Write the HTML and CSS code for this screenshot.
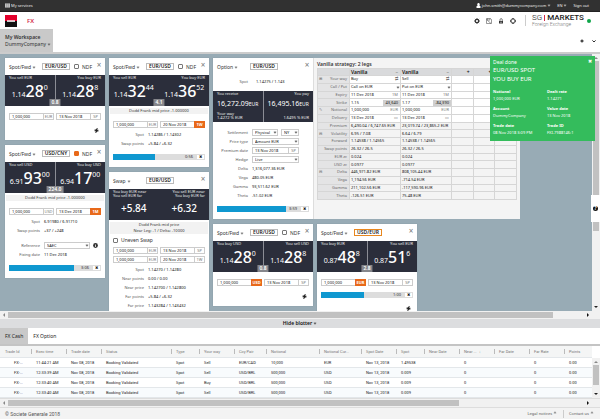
FILE: index.html
```html
<!DOCTYPE html>
<html lang="en">
<head>
<meta charset="utf-8">
<title>SG Markets - FX</title>
<link rel="stylesheet" href="styles.css">
</head>
<body>
<nav class="topbar">
  <a href="#" class="services"><svg class="ico" viewBox="0 0 10 10"><path d="M0 1h10v8H0z" fill="#ddd"/><path d="M3.3 1v8M6.6 1v8M0 3.6h10M0 6.3h10" stroke="#555" stroke-width=".6"/></svg>My services</a>
  <a href="#"><svg class="ico" viewBox="0 0 10 10"><path d="M5 0a2.5 2.7 0 0 1 1.6 4.8L9 6.5V10H1V6.500l2.400-1.700A2.500 2.700 0 0 1 5 0z" fill="#fff"/></svg>john.smith@dummycompany.com<i class="chev"></i></a>
  <a href="#">EN<i class="chev"></i></a>
  <a href="#">Sign out</a>
</nav>
<header class="brandbar">
  <svg class="logo" viewBox="0 0 12 12"><path d="M0 0h12v6H0z" fill="#e2002b"/><path d="M0 6h12v6H0z" fill="#111"/><path d="M2 5.300h8v1.500H2z" fill="#fff"/></svg>
  <a href="#" class="product">FX</a>
  <div class="tools">
    <svg viewBox="0 0 12 12"><circle cx="6" cy="6" r="3.400" fill="none" stroke="#333" stroke-width="2.400"/><path d="M6 0v2M6 10v2M0 6h2M10 6h2M1.800 1.800l1.400 1.400M8.800 8.800l1.400 1.400M1.800 10.200l1.400-1.400M8.800 3.200l1.400-1.400" stroke="#333" stroke-width="1.600"/></svg>
    <svg viewBox="0 0 12 12"><path d="M1 1h8l2 2v8H1zM3 1v3h5V1M1 3l9 8" fill="none" stroke="#555" stroke-width="1.200"/></svg>
    <svg viewBox="0 0 12 12"><path d="M2 6h8v5H2z" fill="#333"/><path d="M4 6V3.500a2.200 2.200 0 0 1 4.500 0V6" fill="none" stroke="#444" stroke-width="1.400"/><path d="M4 8.500h4" stroke="#fff"/></svg>
    <svg viewBox="0 0 12 12"><circle cx="6" cy="6" r="4.500" fill="none" stroke="#444" stroke-width="1.800"/><path d="M6 0v3.500M6 8.500V12M0 6h3.500M8.500 6H12" stroke="#222" stroke-width="2"/><circle cx="6" cy="6" r="2.300" fill="#fff"/></svg>
  </div>
  <div class="brand"><div class="name">SG<i></i><b>MARKETS</b></div><small>Foreign Exchange</small></div>
  <span class="online"></span>
</header>
<div class="workspaces">
  <button class="workspace"><b>My Workspace</b><span>DummyCompany<i class="chev"></i></span></button>
  <div class="wstools">
    <svg viewBox="0 0 10 10"><path d="M5 1v8M1 5h8" stroke="#111" stroke-width="2.600"/></svg>
    <svg viewBox="0 0 10 10"><path d="M1 3.500l4 4 4-4" fill="none" stroke="#111" stroke-width="2.200"/></svg>
  </div>
</div>

<main class="stage">
  <div class="board">
    <div class="stack">
      <section class="card">
        <header><button class="kind">Spot/Fwd<i class="chev"></i></button><button class="pair">EUR/USD</button><label class="tick"><input type="checkbox">NDF</label><button class="close" aria-label="Close">×</button></header>
        <div class="tiles">
          <button class="tile"><small>You sell EUR</small><span class="rate">1.14<b>28</b><sup>0</sup></span></button>
          <button class="tile"><small>You buy EUR</small><span class="rate">1.14<b>28</b><sup>8</sup></span></button>
          <span class="spread">0.8</span>
        </div>
        <div class="fields apart"><div class="field"><input aria-label="Amount" value="1,000,000"><button>EUR</button></div><div class="field"><input aria-label="Date" value="13 Nov 2018"><button>SP</button></div></div>
        <div class="flash"><svg viewBox="0 0 10 10"><path d="M7 0L1 5.500l3 .5L3 10l6-5.500-3-.5zM1 3l8 4" stroke="#222" stroke-width=".8" fill="#222"/></svg></div>
      </section>
      <section class="card">
        <header><button class="kind">Spot/Fwd<i class="chev"></i></button><button class="pair">USD/CNY</button><label class="tick"><input type="checkbox" checked>NDF</label><button class="close" aria-label="Close">×</button></header>
        <div class="tiles">
          <button class="tile"><small>You sell USD</small><span class="rate">6.91<b>93</b><sup>00</sup></span></button>
          <button class="tile"><small>You buy USD</small><span class="rate">6.94<b>17</b><sup>00</sup></span></button>
          <span class="spread">224.0</span>
        </div>
        <p class="strip">Dodd Frank mid price -1.000000</p>
        <div class="fields"><div class="field"><input aria-label="Amount" value="1,000,000"><button>USD</button></div><div class="field"><input aria-label="Date" value="13 Dec 2018"><button class="hot">1M</button></div></div>
        <dl class="facts"><dt>Spot</dt><dd>6.91980 / 6.91710</dd><dt>Swap points</dt><dd>+37 / +248</dd></dl>
        <dl class="facts second"><dt><label for="ref">Reference</label></dt><dd class="pick"><span class="sel"><select id="ref"><option>SAEC</option></select><i class="chev"></i></span><svg class="info" viewBox="0 0 10 10"><circle cx="5" cy="5" r="4.800" fill="#333"/><path d="M5 4v4M5 2v1" stroke="#fff" stroke-width="1.500"/></svg></dd><dt>Fixing date</dt><dd>11 Dec 2018</dd></dl>
        <div class="timer"><div class="bar"><i style="width:78%"></i><span>3:06</span></div><button aria-label="Cancel">✖</button></div>
      </section>
    </div>

    <div class="stack">
      <section class="card">
        <header><button class="kind">Spot/Fwd<i class="chev"></i></button><button class="pair">EUR/USD</button><label class="tick"><input type="checkbox">NDF</label><button class="close" aria-label="Close">×</button></header>
        <div class="tiles joined">
          <button class="tile"><small>You sell EUR</small><span class="rate">1.14<b>32</b><sup>44</sup></span></button>
          <button class="tile"><small>You buy EUR</small><span class="rate">1.14<b>36</b><sup>52</sup></span></button>
          <span class="spread">4.1</span>
        </div>
        <p class="strip">Dodd Frank mid price -1.000000</p>
        <div class="fields"><div class="field"><input aria-label="Amount" value="1,000,000"><button>EUR</button></div><div class="field"><input aria-label="Date" value="20 Nov 2018"><button class="hot">1W</button></div></div>
        <dl class="facts"><dt>Spot</dt><dd>1.14286 / 1.14302</dd><dt>Swap points</dt><dd>+5.84 / +6.32</dd></dl>
        <div class="timer"><div class="bar"><i style="width:50%"></i><span>0:56</span></div><button aria-label="Cancel">✖</button></div>
      </section>
      <section class="card">
        <header><button class="kind">Swap<i class="chev"></i></button><button class="pair">EUR/USD</button><span class="tick"></span><button class="close" aria-label="Close">×</button></header>
        <div class="tiles joined">
          <button class="tile"><small>You buy EUR near<br>You sell EUR far</small><strong>+5.84</strong></button>
          <button class="tile"><small>You sell EUR near<br>You buy EUR far</small><strong>+6.32</strong></button>
        </div>
        <p class="strip">Dodd Frank mid price<br>Near Leg: -1 / Delta: -10000</p>
        <label class="uneven"><input type="checkbox">Uneven Swap</label>
        <div class="fields tight"><div class="field"><input aria-label="Near amount" value="1,000,000"><button>EUR</button></div><div class="field"><input aria-label="Near date" value="13 Nov 2018"><button>SP</button></div></div>
        <div class="fields tight"><div class="field"><input aria-label="Far amount" value="1,000,000"><button>EUR</button></div><div class="field"><input aria-label="Far date" value="20 Nov 2018"><button>1W</button></div></div>
        <dl class="facts"><dt>Spot</dt><dd>1.14270 / 1.14280</dd><dt>Near points</dt><dd>0.00 / 0.00</dd><dt>Near price</dt><dd>1.142700 / 1.142800</dd><dt>Far points</dt><dd>+5.84 / +6.32</dd><dt>Far price</dt><dd>1.143284 / 1.143432</dd></dl>
      </section>
    </div>

    <div class="stack wide">
      <div class="duo">
        <section class="card">
          <header><button class="kind">Option<i class="chev"></i></button><button class="pair">EUR/USD</button><span class="tick"></span><button class="close" aria-label="Close">×</button></header>
          <dl class="facts spot"><dt>Spot</dt><dd>1.14275 / 1.143</dd></dl>
          <div class="tiles">
            <button class="tile"><small>You receive</small><span class="premium">16,272.09<em>EUR</em></span><small>Your way<br>1.4272 % EUR</small></button>
            <button class="tile"><small>You pay</small><span class="premium">16,495.16<em>EUR</em></span><small><br>1.6495 % EUR</small></button>
          </div>
          <dl class="facts terms">
            <dt><label for="settle">Settlement</label></dt><dd class="pick"><span class="sel"><select id="settle"><option>Physical</option></select><i class="chev"></i></span><span class="sel short"><select aria-label="Cut"><option>NY</option></select><i class="chev"></i></span></dd>
            <dt><label for="ptype">Price type</label></dt><dd class="pick"><span class="sel"><select id="ptype"><option>Amount EUR</option></select><i class="chev"></i></span></dd>
            <dt><label for="pdate">Premium date</label></dt><dd class="pick"><span class="field"><input id="pdate" value="13 Nov 2018"><button>SP</button></span></dd>
            <dt><label for="hedge">Hedge</label></dt><dd class="pick"><span class="sel"><select id="hedge"><option>Live</option></select><i class="chev"></i></span></dd>
            <dt>Delta</dt><dd>1,316,077.36 EUR</dd><dt>Vega</dt><dd>480.05 EUR</dd><dt>Gamma</dt><dd>93,511.62 EUR</dd><dt>Theta</dt><dd>-51.02 EUR</dd>
          </dl>
          <div class="timer"><div class="bar"><i style="width:83%"></i><span>3:59</span></div><button aria-label="Cancel">✖</button></div>
        </section>
        <section class="strategy">
          <h2>Vanilla strategy: 2 legs</h2>
          <table>
            <colgroup><col class="names"><col class="leg"><col class="leg"><col><col><col></colgroup>
            <thead><tr><th></th><th><div>Vanilla<span>–</span></div></th><th><div>Vanilla<span>–</span></div></th><th class="add">+</th><th class="add">+</th><th></th></tr></thead>
            <tbody>
            <tr class="edit"><th><div><i>⊞</i>Your way</div></th><td><div>Buy<span>⇄</span></div></td><td><div>Sell<span>⇄</span></div></td><td></td><td></td><td></td></tr>
            <tr class="edit"><th>Call / Put</th><td><div>Call on EUR<i class="chev"></i></div></td><td><div>Put on EUR<i class="chev"></i></div></td><td></td><td></td><td></td></tr>
            <tr class="edit"><th>Expiry</th><td><div>11 Dec 2018<span>1M</span></div></td><td><div>11 Dec 2018<span>1M</span></div></td><td></td><td></td><td></td></tr>
            <tr class="edit"><th>Strike</th><td><div>1.15<b>43,640</b></div></td><td><div>1.17<b>-84,390</b></div></td><td></td><td></td><td></td></tr>
            <tr class="edit"><th><div><i>✎</i>Notional</div></th><td><div>1,000,000<span>EUR</span></div></td><td><div>1,000,000<span>EUR</span></div></td><td></td><td></td><td></td></tr>
            <tr class="edit"><th>Delivery</th><td><div>13 Dec 2018<span>▭</span></div></td><td><div>13 Dec 2018<span>▭</span></div></td><td></td><td></td><td></td></tr>
            <tr><th>Premium</th><td>6,490.04 / 6,747.65 EUR</td><td>23,019.74 / 23,865.2 EUR</td><td></td><td></td><td></td></tr>
            <tr><th><div><i>⊟</i>Volatility</div></th><td>6.95 / 7.08</td><td>6.64 / 6.79</td><td></td><td></td><td></td></tr>
            <tr><th>Forward</th><td>1.14538 / 1.14565</td><td>1.14538 / 1.14565</td><td></td><td></td><td></td></tr>
            <tr><th>Swap points</th><td>26.32 / 26.5</td><td>26.32 / 26.5</td><td></td><td></td><td></td></tr>
            <tr><th>EUR zc</th><td>0.024</td><td>0.024</td><td></td><td></td><td></td></tr>
            <tr><th>USD zc</th><td>0.0977</td><td>0.0977</td><td></td><td></td><td></td></tr>
            <tr><th><div><i>⊟</i>Delta</div></th><td>446,971.82 EUR</td><td>808,105.44 EUR</td><td></td><td></td><td></td></tr>
            <tr><th>Vega</th><td>1,194.56 EUR</td><td>-714.54 EUR</td><td></td><td></td><td></td></tr>
            <tr><th>Gamma</th><td>211,102.56 EUR</td><td>-117,590.96 EUR</td><td></td><td></td><td></td></tr>
            <tr><th>Theta</th><td>-126.51 EUR</td><td>75.48 EUR</td><td></td><td></td><td></td></tr>
            </tbody>
          </table>
        </section>
      </div>
      <div class="row">
        <section class="card">
          <header><button class="kind">Spot/Fwd<i class="chev"></i></button><button class="pair">EUR/USD</button><label class="tick"><input type="checkbox">NDF</label><button class="close" aria-label="Close">×</button></header>
          <div class="tiles">
            <button class="tile"><small>You buy USD</small><span class="rate">1.14<b>28</b><sup>0</sup></span></button>
            <button class="tile"><small>You sell USD</small><span class="rate">1.14<b>28</b><sup>8</sup></span></button>
            <span class="spread">0.8</span>
          </div>
          <div class="fields apart"><div class="field"><input aria-label="Amount" value="1,000,000"><button class="hot">USD</button></div><div class="field"><input aria-label="Date" value="13 Nov 2018"><button>SP</button></div></div>
          <div class="flash"><svg viewBox="0 0 10 10"><path d="M7 0L1 5.500l3 .5L3 10l6-5.500-3-.5zM1 3l8 4" stroke="#222" stroke-width=".8" fill="#222"/></svg></div>
        </section>
        <section class="card">
          <header><button class="kind">Spot/Fwd<i class="chev"></i></button><button class="pair active">USD/EUR</button><span class="tick"></span><button class="close" aria-label="Close">×</button></header>
          <div class="tiles">
            <button class="tile"><small>You buy EUR</small><span class="rate">0.87<b>48</b><sup>8</sup></span></button>
            <button class="tile"><small>You sell EUR</small><span class="rate">0.87<b>51</b><sup>6</sup></span></button>
            <span class="spread">2.8</span>
          </div>
          <div class="fields apart"><div class="field"><input aria-label="Amount" value="1,000,000"><button class="hot">EUR</button></div><div class="field"><input aria-label="Date" value="13 Nov 2018"><button>SP</button></div></div>
          <div class="timer"><div class="bar"><i style="width:52%"></i><span>1:00</span></div><button aria-label="Cancel">✖</button></div>
          <div class="flash"><svg viewBox="0 0 10 10"><path d="M7 0L1 5.500l3 .5L3 10l6-5.500-3-.5zM1 3l8 4" stroke="#222" stroke-width=".8" fill="#222"/></svg></div>
        </section>
      </div>
    </div>
  </div>
  <div class="vscroll"><i class="up"></i><b></b><i class="down"></i></div>
  <aside class="toast">
    <button aria-label="Dismiss">✖</button>
    <p>Deal done</p>
    <h3>EUR/USD SPOT<br>YOU BUY EUR</h3>
    <dl>
      <div><dt>Notional</dt><dd>1,000,000 EUR</dd></div><div><dt>Dealt rate</dt><dd>1.14271</dd></div>
      <div><dt>Account</dt><dd>DummyCompany</dd></div><div><dt>Value date</dt><dd>13 Nov 2018</dd></div>
      <div><dt>Trade date</dt><dd>08 Nov 2018 3:09 PM</dd></div><div><dt>Trade ID</dt><dd>FXI-7988146:1</dd></div>
    </dl>
  </aside>
  <button class="help" aria-label="Help"><span>?</span></button>
</main>
<div class="hscroll board-scroll"><i class="left"></i><b></b><i class="right"></i></div>

<button class="hide">Hide blotter<i class="chev"></i></button>
<nav class="tabs"><a href="#" class="on">FX Cash</a><a href="#">FX Option</a></nav>
<div class="blotter">
  <table>
    <colgroup><col class="w31"><col class="w35"><col class="w35"><col class="w70"><col class="w28"><col class="w35"><col class="w32"><col class="w53"><col class="w42"><col class="w35"><col class="w28"><col class="w35"><col class="w35"><col class="w35"><col class="w35"><col></colgroup>
    <thead><tr><th>Trade Id</th><th>Exec time</th><th>Trade date</th><th>Status</th><th>Type</th><th>Your way</th><th>Ccy Pair</th><th>Notional</th><th>Notional Cur...</th><th>Spot Date</th><th>Spot</th><th>Near Date</th><th>Near ... &nbsp;↓</th><th>Far Date</th><th>Far Rate</th><th>Points</th></tr></thead>
    <tbody>
    <tr><td>FX-...</td><td>11:44:21 AM</td><td>Nov 08, 2018</td><td>Booking Validated</td><td>Spot</td><td>Sell</td><td>EUR/CAD</td><td>10,000</td><td>EUR</td><td>Nov 13, 2018</td><td>1.49538</td><td></td><td>0</td><td></td><td>0</td><td>0.00</td></tr>
    <tr><td>FX-...</td><td>12:33:39 AM</td><td>Nov 08, 2018</td><td>Booking Validated</td><td>Spot</td><td>Sell</td><td>USD/BRL</td><td>500,000</td><td>USD</td><td>Nov 13, 2018</td><td>0.009</td><td></td><td>0</td><td></td><td>0</td><td>0.00</td></tr>
    <tr><td>FX-...</td><td>12:33:40 AM</td><td>Nov 08, 2018</td><td>Booking Validated</td><td>Spot</td><td>Buy</td><td>USD/BRL</td><td>500,000</td><td>USD</td><td>Nov 13, 2018</td><td>0.009</td><td></td><td>0</td><td></td><td>0</td><td>0.00</td></tr>
    <tr><td>FX-...</td><td>12:33:40 AM</td><td>Nov 08, 2018</td><td>Booking Validated</td><td>Spot</td><td>Sell</td><td>USD/BRL</td><td>500,000</td><td>USD</td><td>Nov 13, 2018</td><td>0.009</td><td></td><td>0</td><td></td><td>0</td><td>0.00</td></tr>
    </tbody>
  </table>
  <div class="vscroll"><i class="up"></i><b></b><i class="down"></i></div>
</div>
<div class="hscroll blotter-scroll"><i class="left"></i><b></b><i class="right"></i></div>
<footer class="foot"><span>© Societe Generale 2018</span><a href="#">Legal notices<i class="chev rise"></i></a><a href="#">Contact us<i class="chev rise"></i></a></footer>
</body>
</html>
```
FILE: styles.css
```css
* { box-sizing: border-box; margin: 0; padding: 0; }
body {
  height: 100vh; display: flex; flex-direction: column; overflow: hidden;
  background: #fff; color: #333; font: 5px/8px "Noto Sans", "Open Sans", sans-serif;
}
button, input, select { font: inherit; color: inherit; background: none; border: 0; border-radius: 0; min-width: 0; outline: 0; }
a { color: inherit; text-decoration: none; }
i, em { font-style: normal; }
svg { display: block; }

.chev { display: inline-block; flex: none; width: 2px; height: 2px; margin: 0 1px 1px 2px; border: solid currentColor; border-width: 0 1px 1px 0; transform: rotate(45deg); vertical-align: middle; opacity: .6; }
.chev.rise { transform: rotate(225deg); margin-bottom: 0; }

.topbar { display: flex; align-items: center; gap: 6px; height: 12px; padding: 0 11px 0 5px; background: #313131; color: #eee; font-size: 4px; flex: none; border-bottom: 1px solid #222; }
.topbar a { display: flex; align-items: center; }
.topbar .services { margin-right: auto; }
.ico { width: 5px; height: 5px; margin-right: 1px; }

.brandbar { display: flex; align-items: center; height: 17px; padding: 0 9px 0 5px; flex: none; }
.logo { width: 12px; height: 12px; margin-right: 10px; }
.product { color: #d3294b; font-size: 6px; font-weight: 600; margin-right: auto; }
.tools { display: flex; gap: 6px; padding-right: 9px; border-right: 1px solid #ccc; height: 11px; align-items: center; margin-right: 6px; }
.tools svg { width: 6px; height: 6px; }
.brand { font-family: Roboto, sans-serif; width: 51px; }
.brand .name { font-size: 8px; line-height: 8px; font-weight: 300; color: #222; white-space: nowrap; display: flex; align-items: center; gap: 2px; }
.brand i { flex: none; width: 1px; height: 6px; background: #d3294b; }
.brand b { font-weight: 500; }
.brand small { display: block; font-size: 5px; line-height: 5px; color: #777; font-weight: 300; }
.online { width: 4px; height: 4px; border-radius: 50%; background: #0fa64a; margin-left: 4px; }

.workspaces { display: flex; justify-content: space-between; height: 25px; border-bottom: 2px solid #ccc; flex: none; }
.workspace { background: #c9c9c9; padding: 0 2px 0 5px; text-align: left; line-height: 7px; }
.workspace b { font-weight: 600; }
.workspace b, .workspace span { display: block; }
.wstools { display: flex; align-items: center; gap: 8px; padding-right: 4px; }
.wstools svg { width: 4px; height: 4px; }

.stage { position: relative; flex: 1; min-height: 0; display: flex; overflow: hidden; background: #98abb5; }
.board { flex: 1; min-width: 0; display: flex; align-items: flex-start; gap: 4px; padding: 4px 5px; overflow: hidden; }
.stack { display: flex; flex-direction: column; gap: 5px; flex: 0 0 100px; }
.stack.wide { flex: 0 0 auto; }
.row { display: flex; align-items: flex-start; gap: 4px; }
.duo { display: flex; }
.card { width: 100px; background: #fff; padding-bottom: 7px; box-shadow: 0 0 1px #7c8f99; }
.card > header { display: grid; grid-template-columns: 30px 28px 1fr 6px; align-items: center; gap: 3px; height: 17px; padding: 0 3px 0 4px; }
.kind { text-align: left; white-space: nowrap; }
.pair { border: 1px solid #bbb; height: 7px; line-height: 5px; font-weight: 600; color: #222; }
.pair.active { border-color: #e8871e; }
.tick { display: flex; align-items: center; justify-content: center; gap: 3px; }
input[type=checkbox] { appearance: none; width: 5px; height: 5px; border: 1px solid #777; border-radius: 1px; flex: none; }
input[type=checkbox]:checked { background: #e8691a; border-color: #e8691a; }
.close { font-size: 8px; line-height: 8px; color: #777; align-self: start; margin-top: 3px; }

.tiles { position: relative; display: flex; height: 31px; background: #2b2e3b; color: #fff; }
.tile { flex: 1; display: flex; flex-direction: column; text-align: left; padding: 1px 4px 0; white-space: nowrap; }
.tile + .tile { border-left: 1px solid #8b8d95; }
.tile + .tile small { text-align: right; }
.joined .tile + .tile { border-color: transparent; }
.tile small { font-size: 4px; line-height: 4px; color: #eee; }
.rate { display: flex; align-items: baseline; justify-content: center; font-size: 7px; line-height: 22px; }
.rate b { font-size: 16px; font-weight: 500; line-height: 22px; }
.rate sup { align-self: flex-start; font-size: 7px; line-height: 9px; margin-top: 3px; }
.tile strong { font-size: 10px; font-weight: 500; line-height: 20px; text-align: center; }
.premium { font-size: 7px; line-height: 15px; }
.premium em { font-size: 5px; }
.spread { position: absolute; left: 50%; bottom: 0; transform: translateX(-50%); background: #85868b; padding: 0 2px; font-weight: 600; line-height: 7px; }

.strip { background: #f2f2f2; margin: 2px 1px 0; font-size: 4px; line-height: 6px; text-align: center; }
.fields { display: flex; gap: 2px; padding: 7px 4px 0; }
.fields.tight { padding-top: 2px; }
.field { display: flex; flex: 1; min-width: 0; height: 7px; border: 1px solid #ccc; font-size: 4px; line-height: 5px; }
.field input { flex: 1; width: 0; padding: 0 2px; color: #111; }
.field button { width: 10px; border-left: 1px solid #ccc; color: #777; line-height: 5px; }
.field button.hot { background: #e8691a; color: #fff; font-weight: 700; margin: -1px; width: 11px; border: 0; }
.flash { display: flex; justify-content: flex-end; padding: 8px 6px 0; }
.flash svg { width: 5px; height: 5px; }
.facts { display: grid; grid-template-columns: 32px 1fr; column-gap: 4px; padding: 2px 4px 0 3px; font-size: 4px; line-height: 9px; color: #111; }
.facts dt { text-align: right; color: #555; white-space: nowrap; }
.facts.second { padding-top: 6px; }
.facts.spot { grid-template-columns: 32px 1fr; column-gap: 8px; padding-bottom: 5px; }
.facts.terms { padding: 6px 14px 0 3px; }
.pick { display: flex; align-items: center; gap: 3px; }
.sel { position: relative; display: flex; flex: 1; align-items: center; height: 7px; border: 1px solid #ccc; line-height: 5px; }
.sel.short { flex: 0 0 18px; }
.sel select { appearance: none; flex: 1; width: 0; padding-left: 2px; height: 5px; }
.info { width: 5px; height: 5px; margin-right: 3px; }
.uneven { display: flex; align-items: center; gap: 3px; padding: 2px 4px 1px; }
.timer { display: flex; height: 6px; margin: 6px 4px 0; font-size: 4px; line-height: 6px; }
.bar { flex: 1; display: flex; justify-content: space-between; background: #ddd; }
.bar i { background: #0f98d0; }
.bar span { padding-right: 3px; }
.timer button { width: 9px; border: 1px solid #ddd; line-height: 4px; color: #111; }

.strategy { background: #f4f4f4; border-left: 1px solid #ddd; padding: 2px 3px 0; width: 207px; }
.strategy h2 { font-size: 5px; line-height: 8px; font-weight: 600; }
.strategy table { width: 100%; height: 132px; table-layout: fixed; border-collapse: collapse; font-size: 4px; line-height: 6px; color: #111; }
.strategy .names { width: 32px; }
.strategy .leg { width: 51px; }
.strategy td, .strategy th { border: 1px solid #d6d6d6; padding: 0 0 0 1px; white-space: nowrap; }
.strategy thead th { background: #d9dadc; font-size: 5px; font-weight: 600; }
.strategy thead .add { text-align: right; padding-right: 3px; }
.strategy tbody th { background: #e4e4e5; color: #666; font-weight: 400; text-align: right; padding-right: 2px; }
.strategy .edit td { background: #fff; }
.strategy div { display: flex; justify-content: space-between; align-items: center; }
.strategy div span, .strategy div b { padding: 0 2px; color: #777; font-weight: 400; }
.strategy div b { background: #cfcfcf; color: #222; }

.vscroll { display: flex; flex-direction: column; align-items: center; width: 8px; background: #f1f1f1; flex: none; }
.vscroll b { width: 6px; flex: 0 0 66%; background: #c1c1c1; }
.vscroll i, .hscroll i { width: 0; height: 0; border: 1px solid transparent; border-width: 2px 1px; flex: none; }
.vscroll .up { border-width: 0 2px 2px; border-bottom-color: #888; margin: 3px 0 2px; }
.vscroll .down { border-width: 2px 2px 0; border-top-color: #222; margin: auto 0 3px; }
.hscroll { display: flex; align-items: center; height: 8px; padding: 1px 11px 1px 3px; background: #f1f1f1; flex: none; }
.hscroll b { height: 6px; background: #c1c1c1; }
.hscroll .left { border-width: 2px 2px 2px 0; border-right-color: #888; margin-right: 3px; }
.hscroll .right { border-width: 2px 0 2px 2px; border-left-color: #111; margin-left: auto; }
.board-scroll b { flex: 0 0 93%; }
.blotter-scroll b { flex: 0 0 77%; }

.toast { position: absolute; top: 2px; right: 5px; width: 105px; background: #34bc5c; color: #fff; padding: 3px 3px 5px; line-height: 7px; font-size: 4px; }
.toast p { font-size: 5px; }
.toast h3 { font-size: 6px; line-height: 9px; font-weight: 400; }
.toast dl { display: grid; grid-template-columns: 54px 1fr; row-gap: 3px; padding-top: 4px; }
.toast dt { font-weight: 700; }
.toast button { position: absolute; top: 2px; right: 3px; font-size: 5px; }
.help { position: absolute; right: 0; top: 141px; width: 9px; height: 27px; background: #fff; display: grid; place-items: center; }
.help span { width: 5px; height: 5px; border-radius: 50%; background: #111; color: #fff; font-weight: 700; line-height: 5px; }

.hide { background: #dcdddf; height: 9px; line-height: 9px; font-weight: 600; color: #111; flex: none; }
.tabs { display: flex; height: 18px; line-height: 16px; border-bottom: 2px solid #c4c4c4; flex: none; color: #222; }
.tabs a { padding: 0 5px; }
.tabs .on { background: #c9c9c9; }

.blotter { display: flex; flex: none; border-bottom: 1px solid #ddd; font-family: Roboto, sans-serif; }
.blotter table { flex: 1; width: 0; table-layout: fixed; border-collapse: collapse; font-size: 4px; color: #222; }
.blotter th, .blotter td { padding: 0 0 0 5px; text-align: left; white-space: nowrap; line-height: 9px; border-bottom: 1px solid #e3e7ea; }
.blotter th { background: #f4f5f5; color: #777; font-weight: 400; line-height: 11px; position: relative; }
.blotter th + th::before { content: ""; position: absolute; left: 0; top: 3px; height: 5px; border-left: 1px solid #bbb; }
.blotter tbody tr:nth-child(even) { background: #f8fbfd; }
.blotter td:first-child { padding-left: 14px; }
.blotter .vscroll { margin-top: 12px; }
.blotter .vscroll b { flex-basis: 50%; }
.w28 { width: 28px; } .w31 { width: 31px; } .w32 { width: 32px; } .w35 { width: 35px; }
.w42 { width: 42px; } .w53 { width: 53px; } .w70 { width: 70px; }

.foot { display: flex; align-items: center; gap: 6px; height: 12px; padding: 0 6px 0 5px; background: #f3f3f3; border-top: 1px solid #ddd; flex: none; color: #555; font-size: 4px; }
.foot span { margin-right: auto; font-family: Roboto, sans-serif; font-size: 5px; }
.foot a + a { border-left: 1px solid #ccc; padding-left: 5px; }
```
